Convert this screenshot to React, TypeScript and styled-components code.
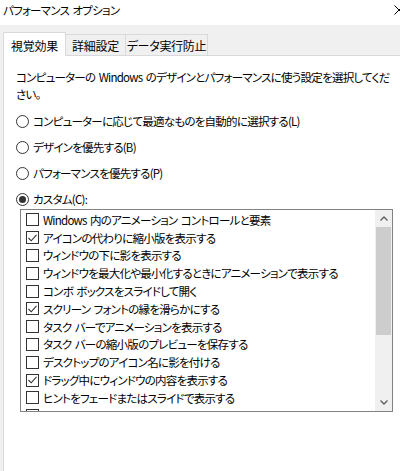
import styled, { createGlobalStyle } from "styled-components";

const GlobalStyle = createGlobalStyle`
  html, body {
    margin: 0;
    padding: 0;
    background: #ffffff;
  }
  body {
    font-family: "Noto Sans CJK JP", "Noto Sans", sans-serif;
    font-size: 11.5px;
    letter-spacing: -0.75px;
    word-spacing: 1.5px;
    color: #000;
    font-feature-settings: "palt";
  }
`;

const Window = styled.div`
  width: 400px;
  height: 471px;
  display: flex;
  flex-direction: column;
  overflow: hidden;
`;
const TitleBar = styled.div`
  height: 25px;
  flex-shrink: 0;
  display: flex;
  justify-content: space-between;
  padding-left: 3px;
  background: #fff;
  span {
    line-height: 20px;
  }
`;
const CloseIcon = styled.svg`
  margin-top: 5px;
  margin-right: -4px;
`;
const Body = styled.div`
  flex: 1;
  display: flex;
  flex-direction: column;
  background: #f0f0f0;
  padding-left: 3px;
`;
const TabStrip = styled.div`
  height: 30px;
  display: flex;
  align-items: flex-end;
`;
const Tab = styled.div<{ $active?: boolean; $w: number }>`
  width: ${(p) => p.$w}px;
  height: ${(p) => (p.$active ? 24 : 21)}px;
  box-sizing: border-box;
  border: 1px solid #d9d9d9;
  border-bottom: none;
  background: ${(p) => (p.$active ? "#fff" : "#f0f0f0")};
  margin-left: ${(p) => (p.$active ? 0 : -1)}px;
  margin-bottom: ${(p) => (p.$active ? -1 : 0)}px;
  position: relative;
  z-index: ${(p) => (p.$active ? 1 : 0)};
  display: flex;
  align-items: center;
  justify-content: center;
  white-space: nowrap;
  font-size: 12px;
  letter-spacing: -0.3px;
  padding-top: ${(p) => (p.$active ? 1 : 0)}px;
`;
const Panel = styled.div`
  flex: 1;
  background: #fff;
  border-top: 1px solid #d9d9d9;
  border-left: 1px solid #d9d9d9;
  padding: 13px 0 0 12px;
  display: flex;
  flex-direction: column;
`;
const Description = styled.p`
  margin: 0;
  line-height: 17px;
  white-space: nowrap;
`;
const RadioGroup = styled.div`
  margin-top: 8px;
  display: flex;
  flex-direction: column;
  gap: 6px;
`;
const RadioRow = styled.label`
  height: 20px;
  display: flex;
  align-items: center;
  gap: 4px;
`;
const RadioCircle = styled.span<{ $checked?: boolean }>`
  width: 13px;
  height: 13px;
  box-sizing: border-box;
  border: 1px solid #333;
  border-radius: 50%;
  display: flex;
  align-items: center;
  justify-content: center;
  &::after {
    content: "";
    width: 7px;
    height: 7px;
    border-radius: 50%;
    background: ${(p) => (p.$checked ? "#333" : "transparent")};
  }
`;
const ListBox = styled.div`
  margin-left: 4px;
  width: 373px;
  height: 203px;
  box-sizing: border-box;
  border: 1px solid #828282;
  display: flex;
  overflow: hidden;
`;
const Items = styled.div`
  flex: 1;
  padding: 1px 0 0 5px;
  overflow: hidden;
`;
const Item = styled.div`
  height: 17.8px;
  display: flex;
  align-items: center;
  gap: 4px;
  white-space: nowrap;
`;
const CheckBox = styled.span`
  width: 13px;
  height: 13px;
  flex-shrink: 0;
  box-sizing: border-box;
  border: 1px solid #333;
  background: #fff;
  display: flex;
  align-items: center;
  justify-content: center;
`;
const ScrollBar = styled.div`
  width: 17px;
  background: #f0f0f0;
  display: flex;
  flex-direction: column;
`;
const ArrowButton = styled.div`
  height: 17px;
  display: flex;
  align-items: center;
  justify-content: center;
`;
const Track = styled.div`
  flex: 1;
  display: flex;
  flex-direction: column;
`;
const Thumb = styled.div`
  height: 108px;
  margin: 0 1px;
  background: #cdcdcd;
`;

const options = [
  { label: "Windows 内のアニメーション コントロールと要素", checked: false },
  { label: "アイコンの代わりに縮小版を表示する", checked: true },
  { label: "ウィンドウの下に影を表示する", checked: false },
  { label: "ウィンドウを最大化や最小化するときにアニメーションで表示する", checked: false },
  { label: "コンボ ボックスをスライドして開く", checked: false },
  { label: "スクリーン フォントの縁を滑らかにする", checked: true },
  { label: "タスク バーでアニメーションを表示する", checked: false },
  { label: "タスク バーの縮小版のプレビューを保存する", checked: false },
  { label: "デスクトップのアイコン名に影を付ける", checked: false },
  { label: "ドラッグ中にウィンドウの内容を表示する", checked: true },
  { label: "ヒントをフェードまたはスライドで表示する", checked: false },
  { label: "プレビューを有効にする", checked: false },
];

const radios = [
  { label: "コンピューターに応じて最適なものを自動的に選択する(L)", checked: false },
  { label: "デザインを優先する(B)", checked: false },
  { label: "パフォーマンスを優先する(P)", checked: false },
  { label: "カスタム(C):", checked: true },
];

function Chevron({ up }: { up?: boolean }) {
  return (
    <svg width="8" height="5" viewBox="0 0 8 5">
      <polyline
        points={up ? "0.5,4.5 4,1 7.5,4.5" : "0.5,0.5 4,4 7.5,0.5"}
        fill="none"
        stroke="#606060"
        strokeWidth="1.4"
      />
    </svg>
  );
}

function App() {
  return (
    <Window>
      <GlobalStyle />
      <TitleBar>
        <span>パフォーマンス オプション</span>
        <CloseIcon width="10" height="10" viewBox="0 0 10 10">
          <path d="M0.5 0.5 L9.5 9.5 M9.5 0.5 L0.5 9.5" stroke="#000" strokeWidth="1" />
        </CloseIcon>
      </TitleBar>
      <Body>
        <TabStrip>
          <Tab $active $w={63}>視覚効果</Tab>
          <Tab $w={61}>詳細設定</Tab>
          <Tab $w={83}>データ実行防止</Tab>
        </TabStrip>
        <Panel>
          <Description>
            コンピューターの Windows のデザインとパフォーマンスに使う設定を選択してくだ
            <br />
            さい。
          </Description>
          <RadioGroup>
            {radios.map((r) => (
              <RadioRow key={r.label}>
                <RadioCircle $checked={r.checked} />
                {r.label}
              </RadioRow>
            ))}
          </RadioGroup>
          <ListBox>
            <Items>
              {options.map((o) => (
                <Item key={o.label}>
                  <CheckBox>
                    {o.checked && (
                      <svg width="9" height="8" viewBox="0 0 9 8">
                        <polyline points="0.5,4 3.2,6.8 8.5,0.8" fill="none" stroke="#333" strokeWidth="1.1" />
                      </svg>
                    )}
                  </CheckBox>
                  {o.label}
                </Item>
              ))}
            </Items>
            <ScrollBar>
              <ArrowButton><Chevron up /></ArrowButton>
              <Track>
                <Thumb />
              </Track>
              <ArrowButton><Chevron /></ArrowButton>
            </ScrollBar>
          </ListBox>
        </Panel>
      </Body>
    </Window>
  );
}

export default App;
